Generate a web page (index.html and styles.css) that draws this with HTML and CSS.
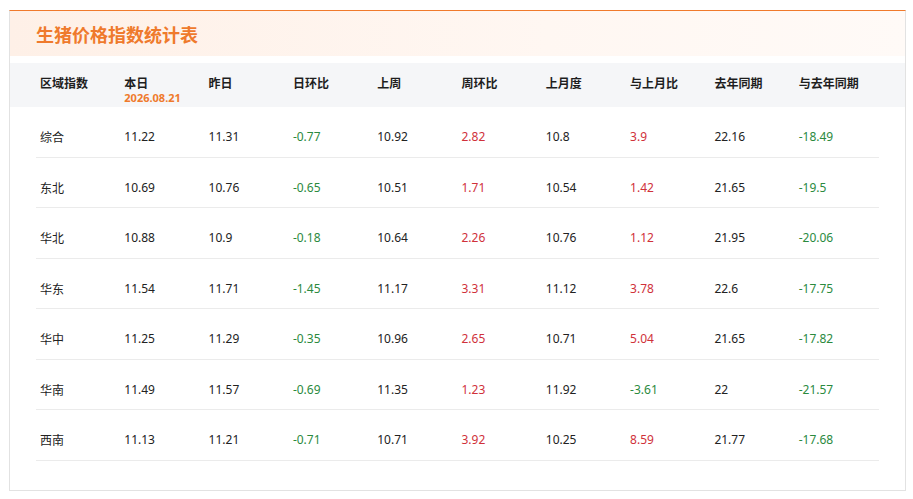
FILE: index.html
```html
<!DOCTYPE html>
<html lang="zh-CN">
<head>
<meta charset="utf-8">
<title>生猪价格指数统计表</title>
<link rel="stylesheet" href="styles.css">
</head>
<body>
<div class="card">
  <div class="title-bar"><h1 class="title">生猪价格指数统计表</h1></div>
  <div class="thead">
    <div class="grid">
      <div class="th">区域指数</div>
      <div class="th">本日<span class="date">2026.08.21</span></div>
      <div class="th">昨日</div>
      <div class="th">日环比</div>
      <div class="th">上周</div>
      <div class="th">周环比</div>
      <div class="th">上月度</div>
      <div class="th">与上月比</div>
      <div class="th">去年同期</div>
      <div class="th">与去年同期</div>
    </div>
  </div>
  <div class="tbody">
    <div class="grid row">
      <div>综合</div><div>11.22</div><div>11.31</div><div class="down">-0.77</div><div>10.92</div><div class="up">2.82</div><div>10.8</div><div class="up">3.9</div><div>22.16</div><div class="down">-18.49</div>
    </div>
    <div class="grid row">
      <div>东北</div><div>10.69</div><div>10.76</div><div class="down">-0.65</div><div>10.51</div><div class="up">1.71</div><div>10.54</div><div class="up">1.42</div><div>21.65</div><div class="down">-19.5</div>
    </div>
    <div class="grid row">
      <div>华北</div><div>10.88</div><div>10.9</div><div class="down">-0.18</div><div>10.64</div><div class="up">2.26</div><div>10.76</div><div class="up">1.12</div><div>21.95</div><div class="down">-20.06</div>
    </div>
    <div class="grid row">
      <div>华东</div><div>11.54</div><div>11.71</div><div class="down">-1.45</div><div>11.17</div><div class="up">3.31</div><div>11.12</div><div class="up">3.78</div><div>22.6</div><div class="down">-17.75</div>
    </div>
    <div class="grid row">
      <div>华中</div><div>11.25</div><div>11.29</div><div class="down">-0.35</div><div>10.96</div><div class="up">2.65</div><div>10.71</div><div class="up">5.04</div><div>21.65</div><div class="down">-17.82</div>
    </div>
    <div class="grid row">
      <div>华南</div><div>11.49</div><div>11.57</div><div class="down">-0.69</div><div>11.35</div><div class="up">1.23</div><div>11.92</div><div class="down">-3.61</div><div>22</div><div class="down">-21.57</div>
    </div>
    <div class="grid row">
      <div>西南</div><div>11.13</div><div>11.21</div><div class="down">-0.71</div><div>10.71</div><div class="up">3.92</div><div>10.25</div><div class="up">8.59</div><div>21.77</div><div class="down">-17.68</div>
    </div>
  </div>
</div>
</body>
</html>
```

FILE: styles.css
```css
html, body {
  margin: 0;
  padding: 0;
  background: #ffffff;
}
body {
  padding: 10px 0 0 9px;
  font-family: "Noto Sans", "Noto Sans CJK SC", sans-serif;
  color: #222222;
}
.card {
  width: 895px;
  height: 479px;
  border: 1px solid #e2e2e2;
  border-top: 1px solid #f07a2c;
  box-sizing: content-box;
}
.title-bar {
  height: 45px;
  background: linear-gradient(to right, #fef0e7 0%, #fff7f2 60%, #fffaf7 100%);
  display: flex;
  align-items: center;
  padding-left: 26px;
}
.title {
  margin: 0;
  font-size: 18px;
  font-weight: 700;
  color: #ef7a2c;
  font-family: "Noto Sans CJK SC", sans-serif;
  line-height: 1;
  padding-top: 1px;
}
.thead {
  margin-top: 7px;
  background: #f5f6f8;
  height: 44px;
  padding: 0 26px;
}
.grid {
  display: grid;
  grid-template-columns: repeat(10, 1fr);
}
.th {
  padding: 12px 0 0 4px;
  font-size: 12px;
  font-weight: 700;
  line-height: 16px;
  font-family: "Noto Sans CJK SC", sans-serif;
  color: #1e1e1e;
  display: flex;
  flex-direction: column;
  align-items: flex-start;
}
.date {
  font-family: "Noto Sans", sans-serif;
  font-size: 11px;
  line-height: 12px;
  font-weight: 700;
  color: #ef7a2c;
  margin-top: 1px;
}
.tbody {
  padding: 0 26px;
}
.row {
  height: 50.5px;
  box-sizing: border-box;
  border-bottom: 1px solid #ebebeb;
  align-items: start;
  font-size: 12px;
  line-height: 17px;
}
.row > div {
  padding: 21px 0 0 4px;
}
.row > div:first-child {
  font-family: "Noto Sans CJK SC", sans-serif;
}
.up {
  color: #d0313a;
}
.down {
  color: #2b8a3e;
}
```
